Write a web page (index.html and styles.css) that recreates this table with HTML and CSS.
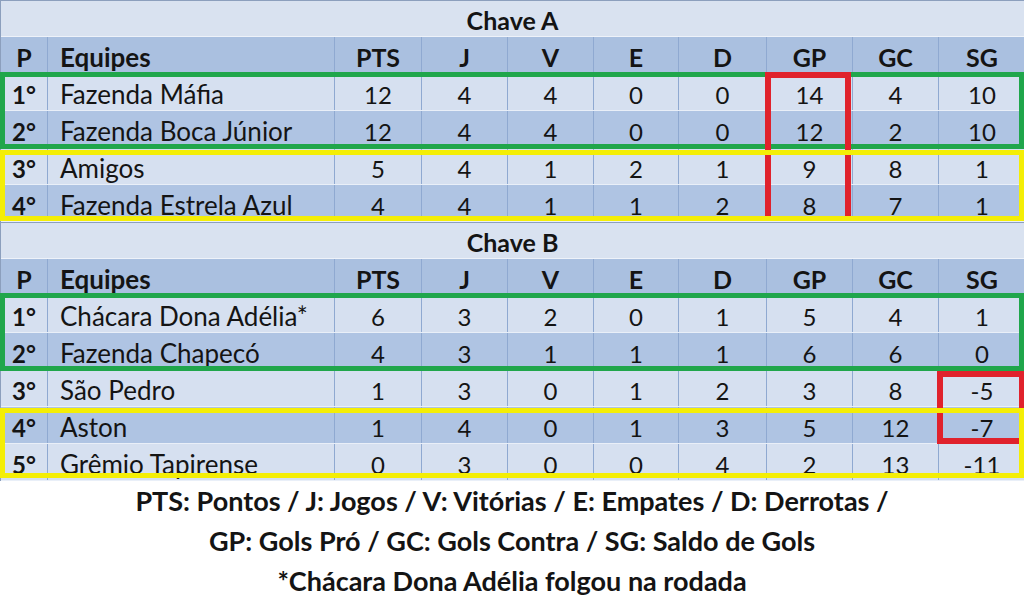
FILE: index.html
```html
<!DOCTYPE html>
<html lang="pt">
<head>
<meta charset="utf-8">
<title>Classificação</title>
<link rel="stylesheet" href="styles.css">
</head>
<body>
<div class="page">
  <div class="board">
    <div class="title">Chave A</div>
    <div class="row head"><div class="c">P</div><div class="c name">Equipes</div><div class="c">PTS</div><div class="c">J</div><div class="c">V</div><div class="c">E</div><div class="c">D</div><div class="c">GP</div><div class="c">GC</div><div class="c">SG</div></div>
    <div class="row light"><div class="c pos">1°</div><div class="c name">Fazenda Máfia</div><div class="c">12</div><div class="c">4</div><div class="c">4</div><div class="c">0</div><div class="c">0</div><div class="c">14</div><div class="c">4</div><div class="c">10</div></div>
    <div class="row dark"><div class="c pos">2°</div><div class="c name">Fazenda Boca Júnior</div><div class="c">12</div><div class="c">4</div><div class="c">4</div><div class="c">0</div><div class="c">0</div><div class="c">12</div><div class="c">2</div><div class="c">10</div></div>
    <div class="row light"><div class="c pos">3°</div><div class="c name">Amigos</div><div class="c">5</div><div class="c">4</div><div class="c">1</div><div class="c">2</div><div class="c">1</div><div class="c">9</div><div class="c">8</div><div class="c">1</div></div>
    <div class="row dark"><div class="c pos">4°</div><div class="c name">Fazenda Estrela Azul</div><div class="c">4</div><div class="c">4</div><div class="c">1</div><div class="c">1</div><div class="c">2</div><div class="c">8</div><div class="c">7</div><div class="c">1</div></div>

    <div class="title">Chave B</div>
    <div class="row head"><div class="c">P</div><div class="c name">Equipes</div><div class="c">PTS</div><div class="c">J</div><div class="c">V</div><div class="c">E</div><div class="c">D</div><div class="c">GP</div><div class="c">GC</div><div class="c">SG</div></div>
    <div class="row light"><div class="c pos">1°</div><div class="c name">Chácara Dona Adélia*</div><div class="c">6</div><div class="c">3</div><div class="c">2</div><div class="c">0</div><div class="c">1</div><div class="c">5</div><div class="c">4</div><div class="c">1</div></div>
    <div class="row dark"><div class="c pos">2°</div><div class="c name">Fazenda Chapecó</div><div class="c">4</div><div class="c">3</div><div class="c">1</div><div class="c">1</div><div class="c">1</div><div class="c">6</div><div class="c">6</div><div class="c">0</div></div>
    <div class="row light"><div class="c pos">3°</div><div class="c name">São Pedro</div><div class="c">1</div><div class="c">3</div><div class="c">0</div><div class="c">1</div><div class="c">2</div><div class="c">3</div><div class="c">8</div><div class="c">-5</div></div>
    <div class="row dark"><div class="c pos">4°</div><div class="c name">Aston</div><div class="c">1</div><div class="c">4</div><div class="c">0</div><div class="c">1</div><div class="c">3</div><div class="c">5</div><div class="c">12</div><div class="c">-7</div></div>
    <div class="row light"><div class="c pos">5°</div><div class="c name">Grêmio Tapirense</div><div class="c">0</div><div class="c">3</div><div class="c">0</div><div class="c">0</div><div class="c">4</div><div class="c">2</div><div class="c">13</div><div class="c">-11</div></div>

    <div class="box green box-a-green"></div>
    <div class="box red box-a-red"></div>
    <div class="box yellow box-a-yellow"></div>
    <div class="box green box-b-green"></div>
    <div class="box red box-b-red"></div>
    <div class="box yellow box-b-yellow"></div>
  </div>
  <div class="legend">
    <p>PTS: Pontos / J: Jogos / V: Vitórias / E: Empates / D: Derrotas /</p>
    <p>GP: Gols Pró / GC: Gols Contra / SG: Saldo de Gols</p>
    <p>*Chácara Dona Adélia folgou na rodada</p>
  </div>
</div>
</body>
</html>
```

FILE: styles.css
```css
* { box-sizing: border-box; }
html, body { margin: 0; padding: 0; background: #ffffff; }
body {
  font-family: "Lato", "Liberation Sans", sans-serif;
  color: #141414;
  width: 1024px;
  height: 598px;
  overflow: hidden;
}
.page { width: 1024px; }
.board {
  position: relative;
  width: 1024px;
  border-left: 1px solid #8c9fbd;
}
.title {
  height: 37px;
  background: #d9e2f0;
  border-top: 1px solid #8c9fbd;
  border-bottom: 1px solid #eef2f9;
  text-align: center;
  font-weight: 700;
  font-size: 25px;
  line-height: 37px;
  padding-top: 1px;
}
.row {
  display: grid;
  grid-template-columns: 46px 287px 87px 86px 86px 85px 88px 86px 86px 87px;
  height: 37px;
  border-bottom: 1px solid #e9eff8;
  font-size: 24px;
}
.row.head { background: #aac0e0; font-weight: 700; font-size: 25px; }
.row.head .c.name { font-size: 26px; }
.row.light { background: #d6e0f0; }
.row.dark { background: #afc4e3; }
.c {
  display: flex;
  align-items: center;
  justify-content: center;
  padding-top: 4px;
  border-left: 1px solid #8fa9d1;
  white-space: nowrap;
}
.c:first-child { border-left: 0; }
.c.name { justify-content: flex-start; padding-left: 12px; font-size: 26px; }
.c.pos { font-weight: 700; }

.box { position: absolute; pointer-events: none; }
.green { border: 5px solid #20a64b; z-index: 1; }
.red { border: 6px solid #e0222c; z-index: 2; }
.yellow { border: 5px solid #f4ee06; z-index: 3; }

.box-a-green { left: -1px; top: 72px; width: 1024px; height: 77px; }
.box-a-yellow { left: -1px; top: 150px; width: 1024px; height: 71px; }
.box-a-red { left: 764px; top: 72px; width: 86px; height: 148px; border-bottom: 0; }
.box-b-green { left: -1px; top: 293px; width: 1024px; height: 78px; }
.box-b-red { left: 936px; top: 371px; width: 88px; height: 73px; }
.box-b-yellow { left: -1px; top: 408px; width: 1024px; height: 70px; }

.legend {
  text-align: center;
  font-weight: 700;
  font-size: 27px;
  line-height: 40px;
  padding-top: 0;
}
.legend p { margin: 0; }
```
